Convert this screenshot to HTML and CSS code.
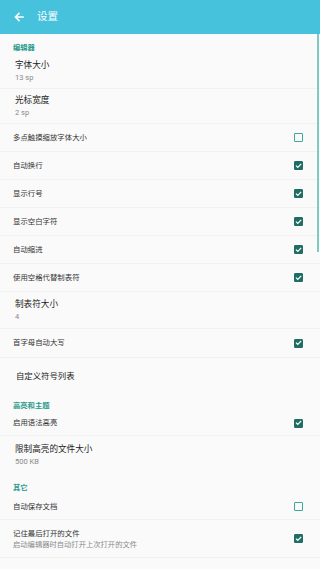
FILE: index.html
```html
<!DOCTYPE html>
<html lang="zh">
<head>
<meta charset="utf-8">
<link rel="stylesheet" href="styles.css">
</head>
<body>
<div class="app">
  <div class="toolbar">
    <svg class="back" width="10" height="10" viewBox="0 0 10 10"><path d="M9 5H1.6M5 1.4L1.4 5L5 8.6" fill="none" stroke="#fff" stroke-width="1.5" stroke-linecap="square"/></svg>
    <span class="title">设置</span>
  </div>
  <div class="list">
    <div class="header h20">编辑器</div>
    <div class="row two h34"><div class="t">字体大小</div><div class="s">13 sp</div></div>
    <div class="row two h35"><div class="t">光标宽度</div><div class="s">2 sp</div></div>
    <div class="row check h28"><span class="l">多点触摸缩放字体大小</span><span class="box"></span></div>
    <div class="row check h28"><span class="l">自动换行</span><span class="box on"><svg viewBox="0 0 9 9"><path d="M2 4.6L3.8 6.4L7.2 2.9" fill="none" stroke="#fff" stroke-width="1.3"/></svg></span></div>
    <div class="row check h28"><span class="l">显示行号</span><span class="box on"><svg viewBox="0 0 9 9"><path d="M2 4.6L3.8 6.4L7.2 2.9" fill="none" stroke="#fff" stroke-width="1.3"/></svg></span></div>
    <div class="row check h28"><span class="l">显示空白字符</span><span class="box on"><svg viewBox="0 0 9 9"><path d="M2 4.6L3.8 6.4L7.2 2.9" fill="none" stroke="#fff" stroke-width="1.3"/></svg></span></div>
    <div class="row check h28"><span class="l">自动缩进</span><span class="box on"><svg viewBox="0 0 9 9"><path d="M2 4.6L3.8 6.4L7.2 2.9" fill="none" stroke="#fff" stroke-width="1.3"/></svg></span></div>
    <div class="row check h28"><span class="l">使用空格代替制表符</span><span class="box on"><svg viewBox="0 0 9 9"><path d="M2 4.6L3.8 6.4L7.2 2.9" fill="none" stroke="#fff" stroke-width="1.3"/></svg></span></div>
    <div class="row two h37"><div class="t">制表符大小</div><div class="s">4</div></div>
    <div class="row check h29"><span class="l">首字母自动大写</span><span class="box on"><svg viewBox="0 0 9 9"><path d="M2 4.6L3.8 6.4L7.2 2.9" fill="none" stroke="#fff" stroke-width="1.3"/></svg></span></div>
    <div class="row big h35"><span class="t">自定义符号列表</span></div>
    <div class="header h19">高亮和主题</div>
    <div class="row check h24"><span class="l">启用语法高亮</span><span class="box on"><svg viewBox="0 0 9 9"><path d="M2 4.6L3.8 6.4L7.2 2.9" fill="none" stroke="#fff" stroke-width="1.3"/></svg></span></div>
    <div class="row two h39"><div class="t">限制高亮的文件大小</div><div class="s">500 KB</div></div>
    <div class="header h20">其它</div>
    <div class="row check h25"><span class="l">自动保存文档</span><span class="box"></span></div>
    <div class="row check small h39 last"><div class="col"><div class="l">记住最后打开的文件</div><div class="s">启动编辑器时自动打开上次打开的文件</div></div><span class="box on"><svg viewBox="0 0 9 9"><path d="M2 4.6L3.8 6.4L7.2 2.9" fill="none" stroke="#fff" stroke-width="1.3"/></svg></span></div>
  </div>
  <div class="scrollbar"></div>
</div>
</body>
</html>
```

FILE: styles.css
```css
* { box-sizing: border-box; }
html, body { margin: 0; padding: 0; }
body {
  width: 320px;
  height: 569px;
  overflow: hidden;
  background: #fafafa;
  font-family: Roboto, "Noto Sans CJK SC", sans-serif;
}
.app { position: relative; width: 320px; height: 569px; }
.toolbar {
  height: 34px;
  background: #47c2dc;
  display: flex;
  align-items: center;
  padding-left: 14px;
}
.back { display: block; margin-right: 13px; }
.title { color: #fff; font-size: 10.5px; line-height: 12px; }
.list { display: flex; flex-direction: column; }
.header {
  padding: 9px 0 0 13px;
  font-size: 7.3px;
  line-height: 10px;
  font-weight: 700;
  color: #2a9a8b;
}
.row { display: flex; padding-left: 15px; padding-right: 17px; }
.row + .row { border-top: 1px solid #f1f1f1; }
.row.last { border-bottom: 1px solid #f1f1f1; }
.two { flex-direction: column; justify-content: center; }
.two .t { font-size: 8.6px; line-height: 12px; color: #222; }
.two .s { font-size: 7.5px; line-height: 13px; color: #888; }
.big { align-items: center; }
.big .t { font-size: 8.4px; color: #222; padding-left: 1px; }
.check { align-items: center; justify-content: space-between; padding-left: 13px; }
.check .l { font-size: 7.4px; line-height: 10px; color: #333; }
.small .s { font-size: 7.3px; line-height: 11px; color: #8a8a8a; }
.small .l { line-height: 11px; }
.box {
  width: 9px;
  height: 9px;
  border: 1.3px solid #3ea797;
  border-radius: 1px;
  flex: none;
}
.box.on { background: #1f6e63; border-color: #1f6e63; }
.box svg { display: block; width: 9px; height: 9px; margin: -1.3px; }
.h19 { height: 19px; }
.h20 { height: 20px; }
.h24 { height: 24px; }
.h25 { height: 25px; }
.h28 { height: 28px; }
.h29 { height: 29px; }
.h34 { height: 34px; }
.h35 { height: 35px; }
.h37 { height: 37px; }
.h39 { height: 39px; }
.scrollbar {
  position: absolute;
  right: 1px;
  top: 34px;
  width: 2px;
  height: 218px;
  background: #7fcbc2;
}
```
